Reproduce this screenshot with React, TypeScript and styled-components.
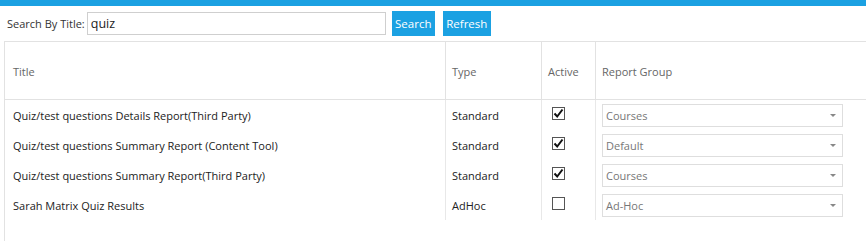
import styled, { createGlobalStyle } from "styled-components";

const GlobalStyle = createGlobalStyle`
  html, body {
    margin: 0;
    padding: 0;
    background: #fff;
    overflow: hidden;
  }
  body {
    font-family: "Open Sans", "Noto Sans", sans-serif;
    font-size: 11px;
    color: #333;
  }
`;

const reports = [
  { title: "Quiz/test questions Details Report(Third Party)", type: "Standard", active: true, group: "Courses" },
  { title: "Quiz/test questions Summary Report (Content Tool)", type: "Standard", active: true, group: "Default" },
  { title: "Quiz/test questions Summary Report(Third Party)", type: "Standard", active: true, group: "Courses" },
  { title: "Sarah Matrix Quiz Results", type: "AdHoc", active: false, group: "Ad-Hoc" },
];

const App = () => {
  return (
    <Page>
      <GlobalStyle />
      <TopBar />
      <SearchRow>
        <SearchLabel>Search By Title:</SearchLabel>
        <SearchInput defaultValue="quiz" />
        <ActionButton $w={43}>Search</ActionButton>
        <ActionButton $w={48}>Refresh</ActionButton>
      </SearchRow>
      <GridWrap>
        <HeaderRow>
          <HeadCell>Title</HeadCell>
          <HeadCell>Type</HeadCell>
          <HeadCell>Active</HeadCell>
          <HeadCell>Report Group</HeadCell>
        </HeaderRow>
        {reports.map((r) => (
          <DataRow key={r.title}>
            <Cell>{r.title}</Cell>
            <Cell>{r.type}</Cell>
            <Cell>
              <CheckBox>
                {r.active && (
                  <svg width="11" height="11" viewBox="0 0 11 11">
                    <path d="M1.5 5.5 L4.2 8.5 L9.5 1.5" fill="none" stroke="#111" strokeWidth="2" />
                  </svg>
                )}
              </CheckBox>
            </Cell>
            <Cell>
              <GroupSelect>
                <span>{r.group}</span>
                <Caret />
              </GroupSelect>
            </Cell>
          </DataRow>
        ))}
      </GridWrap>
    </Page>
  );
};

export default App;

const Page = styled.div`
  width: 866px;
  height: 241px;
  overflow: hidden;
`;

const TopBar = styled.div`
  height: 6px;
  background: #1ba1e2;
`;

const SearchRow = styled.div`
  display: flex;
  align-items: center;
  height: 29px;
  padding: 0 0 0 7px;
  margin-top: 3px;
`;

const SearchLabel = styled.label`
  color: #333;
  margin-right: 2px;
`;

const SearchInput = styled.input`
  box-sizing: border-box;
  width: 299px;
  height: 23px;
  border: 1px solid #cfcfcf;
  padding: 0 3px;
  font-family: "Open Sans", "Noto Sans", sans-serif;
  font-size: 12.5px;
  color: #222;
  outline: none;
  margin-right: 6px;
`;

const ActionButton = styled.button<{ $w: number }>`
  width: ${(p) => p.$w}px;
  height: 25px;
  padding: 0;
  border: none;
  background: #1ba1e2;
  color: #fff;
  font-family: "Open Sans", "Noto Sans", sans-serif;
  font-size: 11.5px;
  margin-right: 8px;
  cursor: pointer;
`;

const GridWrap = styled.div`
  margin: 3px 0 0 4px;
  border-top: 1px solid #e2e2e2;
  border-left: 1px solid #e2e2e2;
  height: 240px;
  width: 880px;
`;

const HeaderRow = styled.div`
  display: grid;
  grid-template-columns: 440px 96px 54px 1fr;
  height: 57px;
  border-bottom: 1px solid #e2e2e2;
`;

const HeadCell = styled.div`
  display: flex;
  align-items: center;
  padding: 2px 0 0 8px;
  color: #666;
  & + & {
    border-left: 1px solid #e2e2e2;
    padding-left: 6px;
  }
`;

const DataRow = styled.div`
  display: grid;
  grid-template-columns: 440px 96px 54px 1fr;
  height: 30px;
`;

const Cell = styled.div`
  display: flex;
  align-items: center;
  padding-left: 8px;
  color: #222;
  & + & {
    border-left: 1px solid #e8e8e8;
    padding-left: 6px;
  }
`;

const CheckBox = styled.span`
  box-sizing: border-box;
  width: 13px;
  height: 13px;
  border: 1px solid #555;
  margin: -3px 0 0 4px;
  display: flex;
  align-items: center;
  justify-content: center;
  background: #fff;
`;

const GroupSelect = styled.div`
  box-sizing: border-box;
  width: 241px;
  height: 23px;
  border: 1px solid #dedede;
  display: flex;
  align-items: center;
  justify-content: space-between;
  padding: 0 6px 0 3px;
  color: #777;
`;

const Caret = styled.span`
  width: 0;
  height: 0;
  border-left: 3px solid transparent;
  border-right: 3px solid transparent;
  border-top: 3px solid #888;
`;
